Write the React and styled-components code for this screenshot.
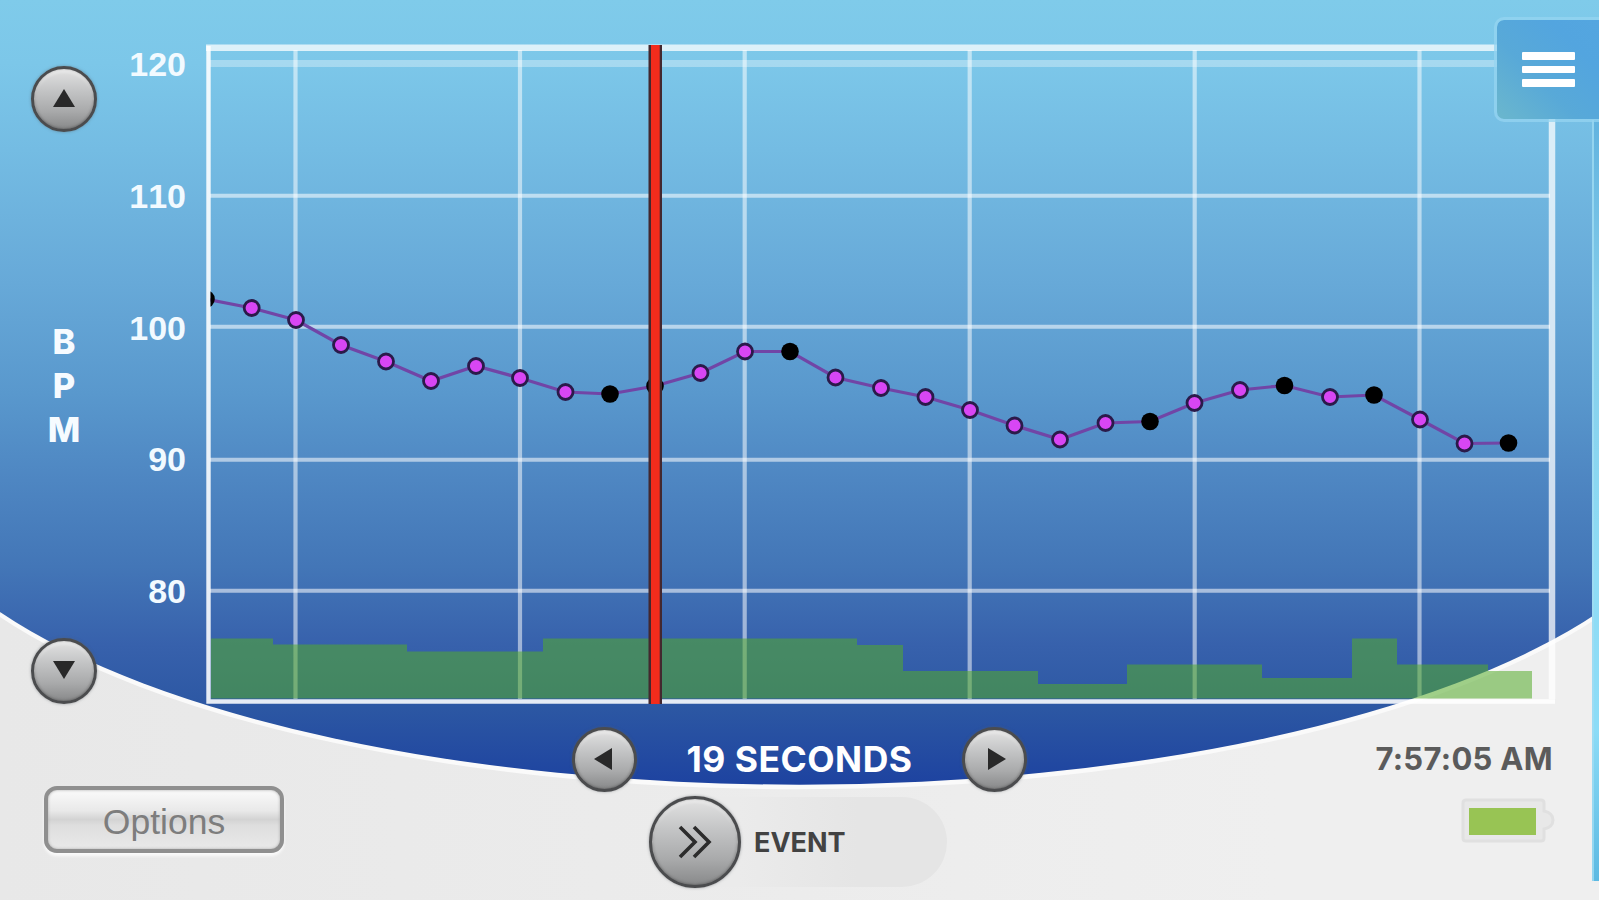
import React from "react";
import styled, { createGlobalStyle } from "styled-components";

const GlobalStyle = createGlobalStyle`
  html, body { margin: 0; padding: 0; }
  body { width: 1599px; height: 900px; overflow: hidden; }
  * { box-sizing: border-box; }
  button { font: inherit; margin: 0; padding: 0; }
`;

const Screen = styled.div`
  position: relative;
  width: 1599px;
  height: 900px;
  overflow: hidden;
  display: flex;
  flex-direction: column;
  background: linear-gradient(90deg, #e8e8e8 0%, #ececec 50%, #efefef 80%);
  font-family: Inter, "Liberation Sans", sans-serif;
`;

const Backdrop = styled.svg`
  position: absolute;
  inset: 0;
`;

const Monitor = styled.main`
  position: relative;
  display: flex;
  height: 706px;
`;

const ScaleColumn = styled.div`
  width: 128px;
  padding: 66px 0 2px;
  display: flex;
  flex-direction: column;
  align-items: center;
  justify-content: space-between;
`;

const RoundButton = styled.button`
  width: ${(p) => p.$size}px;
  height: ${(p) => p.$size}px;
  flex: none;
  display: grid;
  place-items: center;
  border-radius: 50%;
  border: 3px solid #4b4c4e;
  background: linear-gradient(180deg, #e2e2e2 0%, #c4c5c6 35%, #a9aaab 70%, #88898a 100%);
  box-shadow: inset 0 3px 3px rgba(255, 255, 255, 0.55), inset 0 0 3px #555,
    0 0 3px rgba(90, 95, 100, 0.55);
`;

const Unit = styled.div`
  display: flex;
  flex-direction: column;
  align-items: center;
  padding-top: 1px;
  color: #f6fbff;
  font-size: 34.5px;
  font-weight: 800;
  line-height: 44px;
`;

const Axis = styled.div`
  width: 58px;
  padding-top: 46px;
  display: flex;
  flex-direction: column;
  gap: 97.8px;
  align-items: flex-end;
  margin-right: 20px;
`;

const AxisLabel = styled.span`
  height: 34px;
  line-height: 36px;
  font-family: "Liberation Sans", Arial, sans-serif;
  font-size: 34px;
  font-weight: 700;
  font-kerning: none;
  color: #f2faff;
`;

const Plot = styled.svg`
  display: block;
  flex: none;
`;

const Footer = styled.footer`
  position: relative;
  height: 194px;
  display: grid;
  grid-template-columns: 572px 455px 1fr;
`;

const FooterLeft = styled.div`
  padding: 80px 0 0 44px;
`;

const OptionsButton = styled.button`
  display: block;
  width: 240px;
  height: 67px;
  border: 4px solid #8f8f8f;
  border-radius: 13px;
  background: linear-gradient(180deg, #fafafa 0%, #e9e9e9 35%, #d3d3d3 50%, #dedede 60%, #e9e9e9 100%);
  box-shadow: inset 0 0 3px #aaa, 0 3px 3px #fafafa;
  && {
    font-family: "Liberation Sans", Arial, sans-serif;
    font-size: 35.5px;
    line-height: 54px;
    padding-top: 4px;
  }
  color: #7d7d7d;
`;

const FooterCenter = styled.div`
  padding-top: 20px;
`;

const WindowRow = styled.div`
  display: flex;
  align-items: center;
  justify-content: space-between;
  height: 66px;
`;

const WindowLabel = styled.span`
  color: #fff;
  font-size: 35.5px;
  font-weight: 700;
  letter-spacing: 0.5px;
  white-space: nowrap;
`;

const EventControl = styled.div`
  display: flex;
  align-items: center;
  width: 298px;
  height: 90px;
  margin: 5px 0 0 77px;
  gap: 13px;
  border-radius: 45px;
  background: linear-gradient(90deg, #ebebeb 30%, #e5e5e5 70%);
`;

const EventLabel = styled.span`
  color: #424242;
  font-size: 27px;
  font-weight: 700;
`;

const Status = styled.div`
  display: flex;
  flex-direction: column;
  align-items: flex-end;
  padding: 33px 46px 0 0;
`;

const Clock = styled.time`
  color: #5b5b5b;
  font-size: 31px;
  font-weight: 700;
  letter-spacing: 0.3px;
  line-height: 40px;
  white-space: nowrap;
`;

const Battery = styled.svg`
  margin: 18px -4px 0 0;
`;

const MenuTab = styled.button`
  position: absolute;
  top: 17px;
  right: -4px;
  width: 109px;
  height: 105px;
  border: 3.5px solid rgba(150, 212, 240, 0.75);
  border-radius: 10px 0 0 10px;
  background: linear-gradient(45deg, #6bb7cd 0%, #58a9d8 40%, #53a5df 75%, #54a6e0 100%);
  background-clip: padding-box;
  display: flex;
  flex-direction: column;
  align-items: flex-start;
  justify-content: center;
  gap: 6px;
  padding-left: 25px;
`;

const MenuBar = styled.span`
  width: 53px;
  height: 7.5px;
  background: #fff;
  border-radius: 1px;
`;

const DrawerEdge = styled.div`
  position: absolute;
  top: 120px;
  right: 0;
  width: 7px;
  height: 761px;
  background: linear-gradient(180deg, #62b3df 0%, #84cdea 25%, #8fdcf5 60%, #8cdcf7 80%, #5cb9e2 100%);
  border-left: 2px solid rgba(160, 220, 242, 0.8);
`;

const SAMPLES = [
  [206, 299, 1], [251.7, 308], [296, 320], [341, 345], [386, 361.5], [431, 381],
  [476, 366], [520, 378], [565.5, 392], [610, 394, 1], [655, 386, 1], [700.5, 373],
  [745, 351.5], [790, 351.5, 1], [835.5, 377.5], [881, 388], [925.5, 397], [970, 410],
  [1014.5, 425.5], [1060, 439.5], [1105.5, 423], [1150, 421.5, 1], [1194.5, 403],
  [1240, 390], [1284.5, 385.5, 1], [1330, 397], [1374, 395, 1], [1420, 419.5],
  [1464.5, 443.5], [1508.5, 443, 1],
];

const ACTIVITY = [
  [211, 638.5], [273, 644.5], [407, 651.5], [543, 638.5], [857, 645], [903, 671],
  [1038, 684], [1127, 664.5], [1262, 678], [1352, 638.5], [1397, 664.5], [1488, 671],
];

const activityPath =
  "M211 698.5" + ACTIVITY.map(([x, y]) => ` H${x} V${y}`).join("") + " H1532 V698.5 Z";

const ARROWS = {
  up: "M12 1 L23 19 H1 Z",
  down: "M12 19 L23 1 H1 Z",
  left: "M1 11 L19 0 V22 Z",
  right: "M24 11 L6 0 V22 Z",
};

function Arrow({ to }) {
  return (
    <svg width="24" height="22" viewBox="0 0 24 22">
      <path d={ARROWS[to]} fill="#292929" />
    </svg>
  );
}

function Chart() {
  return (
    <Plot width="1352" height="706" viewBox="206 0 1352 706">
      <defs>
        <clipPath id="plotArea">
          <rect x="210.5" y="40" width="1343" height="665" />
        </clipPath>
      </defs>
      <g fill="none" stroke="#fff">
        <path d="M210 63.5 H1550" strokeWidth="7" strokeOpacity="0.32" />
        <g strokeWidth="4" strokeOpacity="0.55">
          {[195.7, 326.7, 459.7, 590.7].map((y) => (
            <path key={y} d={`M210 ${y} H1550`} />
          ))}
        </g>
        <g strokeWidth="4.2" strokeOpacity="0.52">
          {[295.5, 520, 744.7, 969.7, 1194.7, 1419.5].map((x) => (
            <path key={x} d={`M${x} 50 V699`} />
          ))}
        </g>
        <path d="M206 47.7 H1552" strokeWidth="6.5" strokeOpacity="0.74" />
        <path d="M1552 51 V699" strokeWidth="6.5" strokeOpacity="0.74" />
      </g>
      <path d={activityPath} fill="rgb(84,172,42)" fillOpacity="0.55" />
      <path d="M208.5 46 V701.5 H1555" fill="none" stroke="#fff" strokeWidth="4.4" strokeOpacity="0.88" />
      <g clipPath="url(#plotArea)">
        <polyline
          points={SAMPLES.map(([x, y]) => `${x},${y}`).join(" ")}
          fill="none"
          stroke="#7145a6"
          strokeWidth="3.2"
        />
        {SAMPLES.map(([x, y, missed]) => (
          <circle
            key={x}
            cx={x}
            cy={y}
            r={missed ? 8.8 : 7.5}
            fill={missed ? "#000" : "#d846f4"}
            stroke={missed ? "none" : "#2b1a4a"}
            strokeWidth="2.8"
          />
        ))}
      </g>
      <rect x="648.5" y="45" width="13.5" height="659" fill="#43282f" />
      <rect x="651" y="45" width="8.7" height="659" fill="#f22c1c" />
    </Plot>
  );
}

export default function App() {
  return (
    <>
      <GlobalStyle />
      <Screen>
        <Backdrop width="1599" height="900" viewBox="0 0 1599 900">
          <defs>
            <linearGradient id="sky" gradientUnits="userSpaceOnUse" x1="0" y1="0" x2="0" y2="787">
              <stop offset="0" stopColor="#7fcbea" />
              <stop offset="0.08" stopColor="#7cc7e9" />
              <stop offset="0.19" stopColor="#74bce3" />
              <stop offset="0.36" stopColor="#67a9d8" />
              <stop offset="0.5" stopColor="#5998cd" />
              <stop offset="0.61" stopColor="#4e86c2" />
              <stop offset="0.72" stopColor="#4376b7" />
              <stop offset="0.82" stopColor="#3761ac" />
              <stop offset="0.9" stopColor="#2c57a3" />
              <stop offset="1" stopColor="#1d42a0" />
            </linearGradient>
          </defs>
          <path
            d="M1599 614 A906 326 0 0 1 0 614"
            fill="none"
            stroke="#fafafa"
            strokeWidth="5"
          />
          <path d="M0 0 H1599 V612 A906 326 0 0 1 0 612 Z" fill="url(#sky)" />
        </Backdrop>

        <Monitor>
          <ScaleColumn>
            <RoundButton $size={66} aria-label="Scroll up">
              <Arrow to="up" />
            </RoundButton>
            <Unit>
              <span>B</span>
              <span>P</span>
              <span>M</span>
            </Unit>
            <RoundButton $size={66} aria-label="Scroll down">
              <Arrow to="down" />
            </RoundButton>
          </ScaleColumn>
          <Axis>
            {[120, 110, 100, 90, 80].map((v) => (
              <AxisLabel key={v}>{v}</AxisLabel>
            ))}
          </Axis>
          <Chart />
        </Monitor>

        <Footer>
          <FooterLeft>
            <OptionsButton>Options</OptionsButton>
          </FooterLeft>
          <FooterCenter>
            <WindowRow>
              <RoundButton $size={65} aria-label="Shorter window">
                <Arrow to="left" />
              </RoundButton>
              <WindowLabel>19 SECONDS</WindowLabel>
              <RoundButton $size={65} aria-label="Longer window">
                <Arrow to="right" />
              </RoundButton>
            </WindowRow>
            <EventControl>
              <RoundButton $size={92} aria-label="Mark event">
                <svg width="36" height="36" viewBox="0 0 36 36" fill="none" stroke="#2c2c2c" strokeWidth="3.6">
                  <path d="M3 3 L18 18 L3 33 M17 3 L32 18 L17 33" />
                </svg>
              </RoundButton>
              <EventLabel>EVENT</EventLabel>
            </EventControl>
          </FooterCenter>
          <Status>
            <Clock>7:57:05 AM</Clock>
            <Battery width="97" height="48" viewBox="0 0 97 48">
              <path
                d="M6 3 H81 Q84 3 84 6 V14 Q93 16 93 23 Q93 30 84 32 V41 Q84 44 81 44 H6 Q3 44 3 41 V6 Q3 3 6 3 Z"
                fill="#e8e8e8"
                stroke="#e0e0e0"
                strokeWidth="3"
              />
              <rect x="9" y="11" width="67" height="27" fill="#98c454" />
            </Battery>
          </Status>
        </Footer>

        <DrawerEdge />
        <MenuTab aria-label="Menu">
          <MenuBar />
          <MenuBar />
          <MenuBar />
        </MenuTab>
      </Screen>
    </>
  );
}
